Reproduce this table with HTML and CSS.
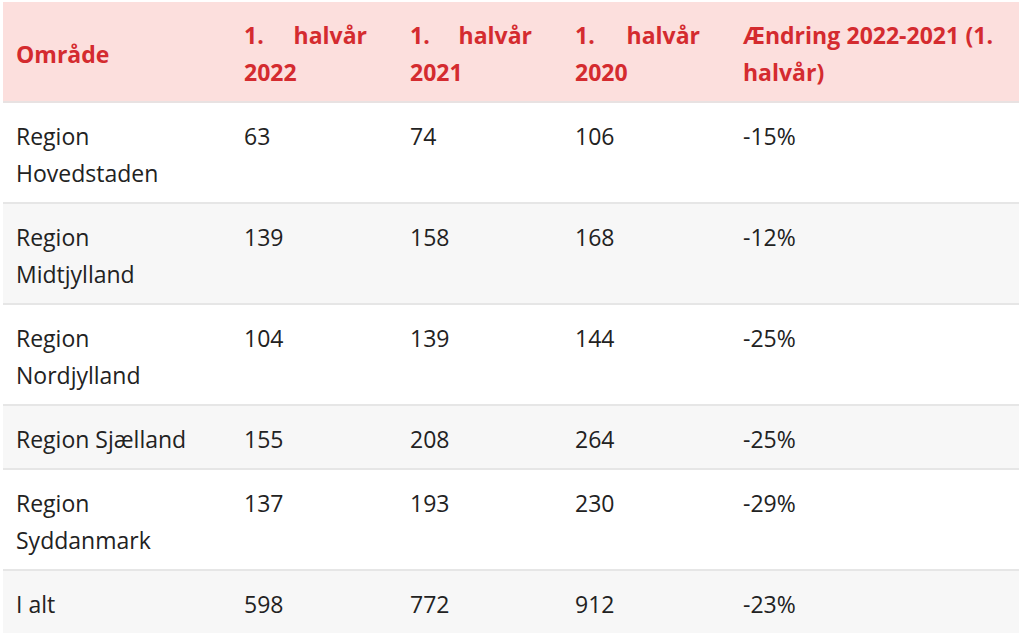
FILE: index.html
```html
<!DOCTYPE html>
<html lang="da">
<head>
<meta charset="utf-8">
<title>Tabel</title>
<link rel="stylesheet" href="styles.css">
</head>
<body>
<table class="data">
  <colgroup>
    <col class="c1"><col class="c2"><col class="c3"><col class="c4"><col class="c5">
  </colgroup>
  <thead>
    <tr>
      <th>Område</th>
      <th>1. halvår 2022</th>
      <th>1. halvår 2021</th>
      <th>1. halvår 2020</th>
      <th class="last">Ændring 2022-2021 (1. halvår)</th>
    </tr>
  </thead>
  <tbody>
    <tr><td>Region Hovedstaden</td><td>63</td><td>74</td><td>106</td><td>-15%</td></tr>
    <tr><td>Region Midtjylland</td><td>139</td><td>158</td><td>168</td><td>-12%</td></tr>
    <tr><td>Region Nordjylland</td><td>104</td><td>139</td><td>144</td><td>-25%</td></tr>
    <tr><td>Region Sjælland</td><td>155</td><td>208</td><td>264</td><td>-25%</td></tr>
    <tr><td>Region Syddanmark</td><td>137</td><td>193</td><td>230</td><td>-29%</td></tr>
    <tr><td>I alt</td><td>598</td><td>772</td><td>912</td><td>-23%</td></tr>
  </tbody>
</table>
</body>
</html>
```
FILE: styles.css
```css
html, body {
  margin: 0;
  padding: 0;
  background: #ffffff;
}
body {
  padding: 2px 5px 0 3px;
  font-family: "Open Sans", "Liberation Sans", sans-serif;
}
.data {
  width: 1016px;
  border-collapse: collapse;
  table-layout: fixed;
  font-size: 23px;
  color: #222222;
}
.c1 { width: 228px; }
.c2 { width: 166px; }
.c3 { width: 165px; }
.c4 { width: 168px; }
.c5 { width: 289px; }
.data th,
.data td {
  padding: 15px 26px 10px 13px;
  line-height: 37px;
  vertical-align: top;
  text-align: left;
}
.data th {
  background: #fcdfdd;
  color: #d42b2f;
  font-weight: 700;
  text-align: justify;
  vertical-align: middle;
  padding-right: 30px;
  border-bottom: 2px solid #e8e2e2;
}
.data th.last {
  padding-right: 26px;
}
.data td {
  font-weight: 400;
}
.data tbody tr {
  border-bottom: 2px solid #e6e6e6;
}
.data tbody tr:nth-child(even) td {
  background: #f7f7f7;
}
.data tbody tr:last-child {
  border-bottom: none;
}
```
